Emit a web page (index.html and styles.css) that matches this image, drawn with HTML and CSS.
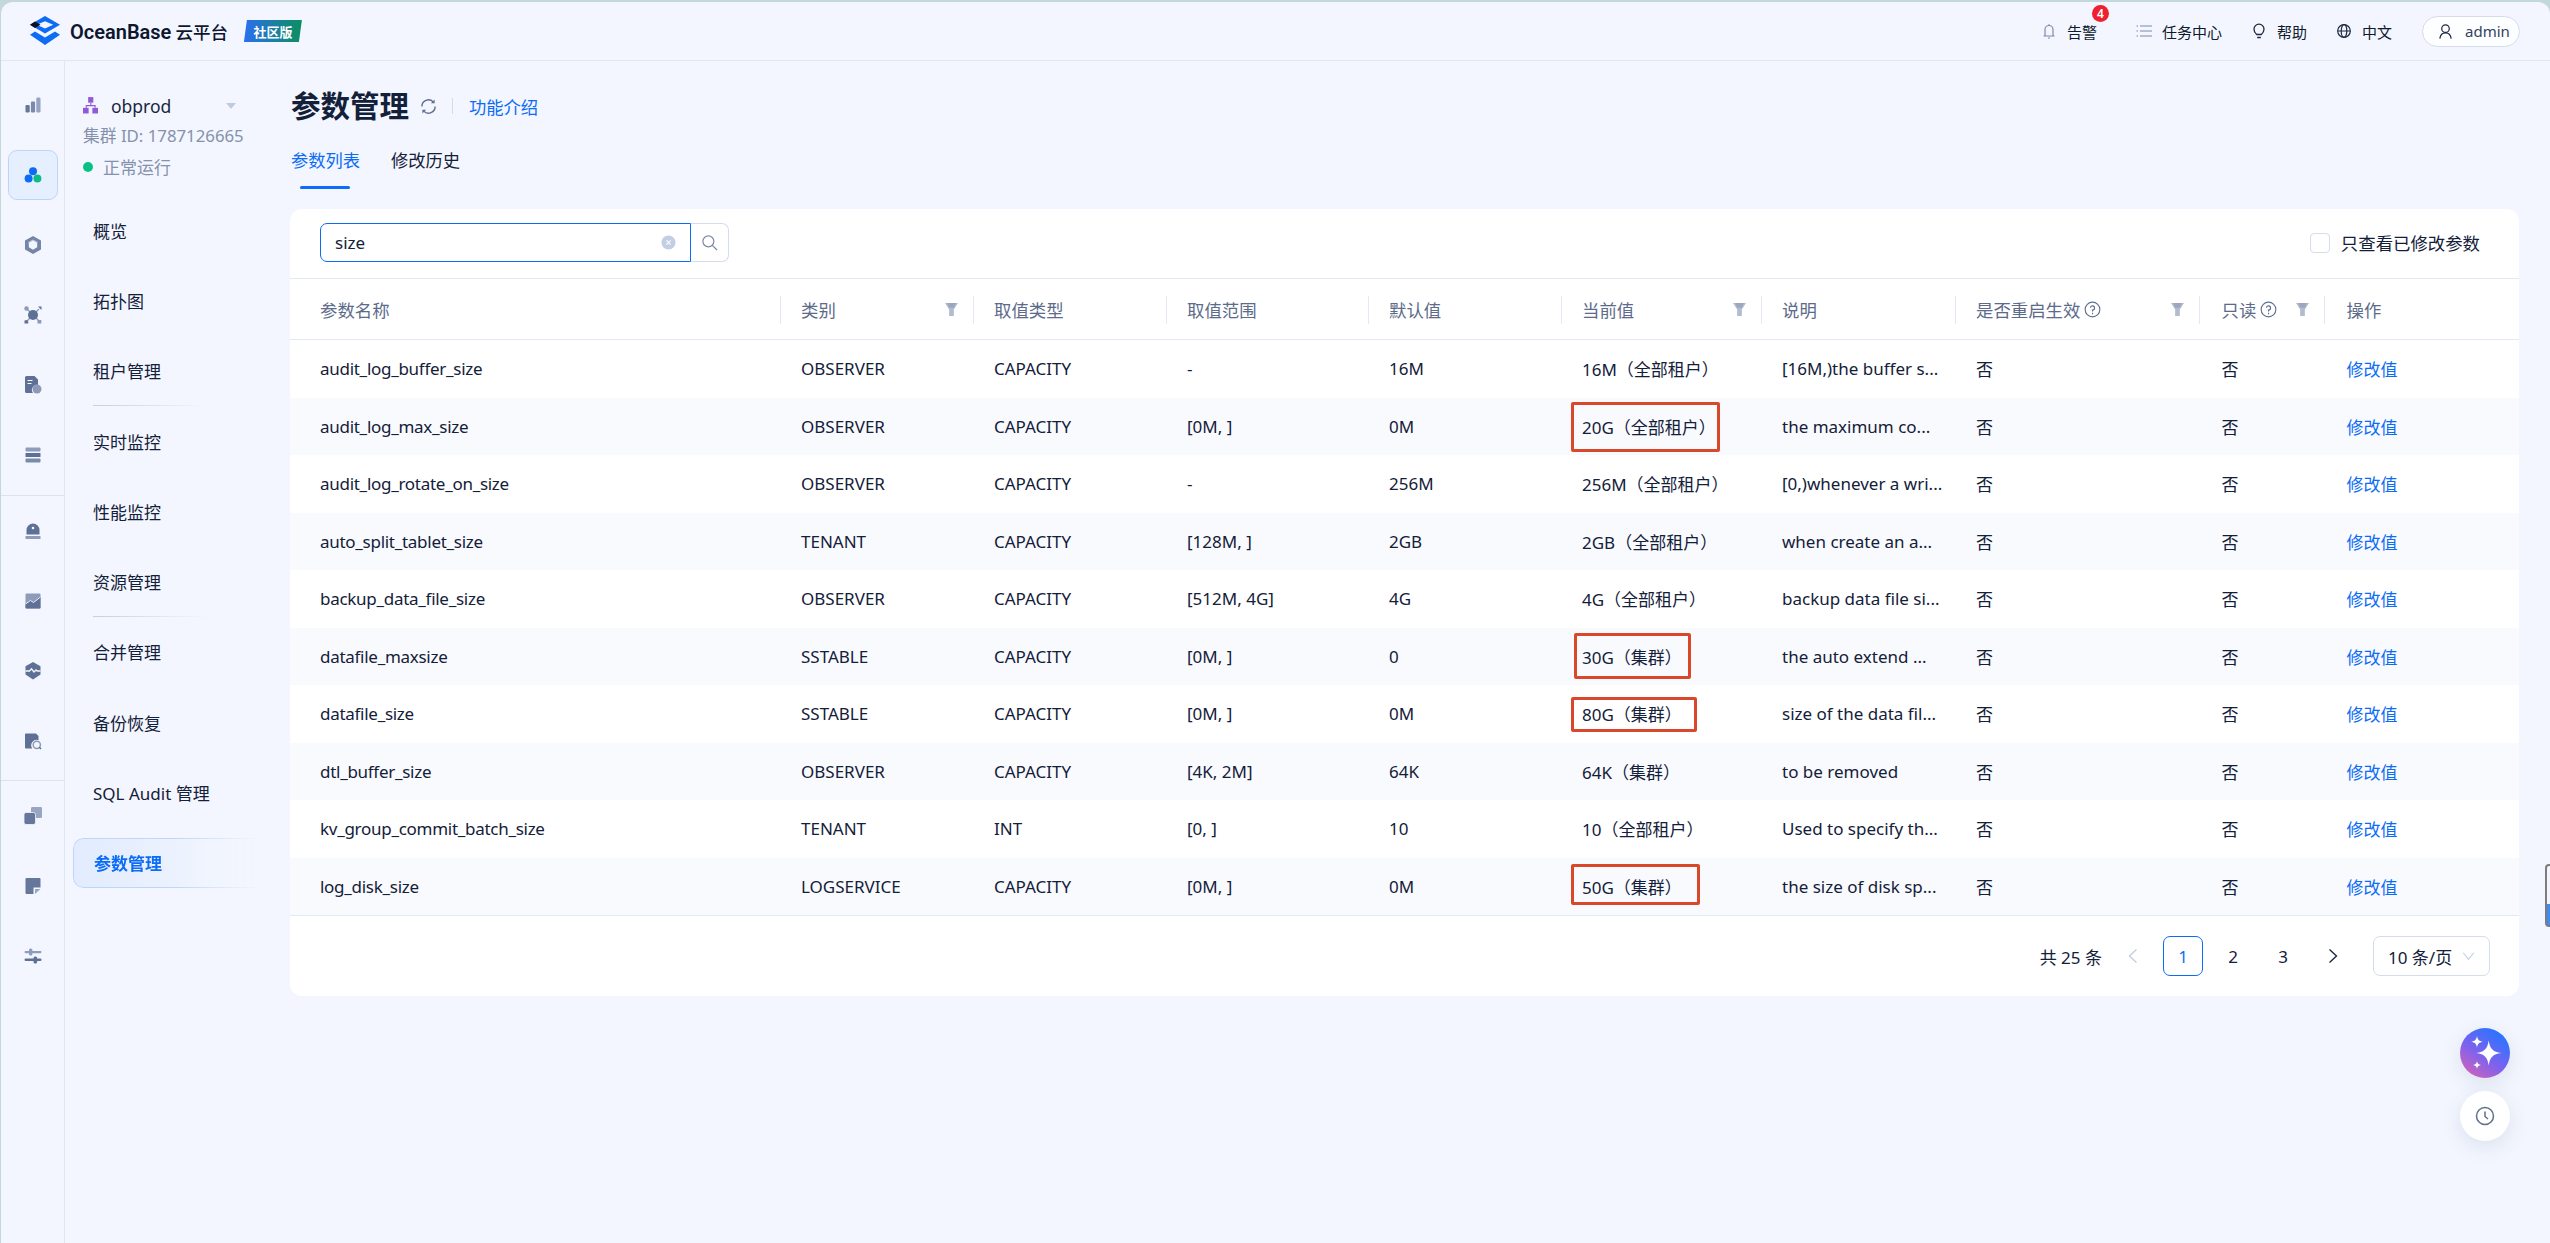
FILE: index.html
```html
<!DOCTYPE html>
<html lang="zh-CN">
<head>
<meta charset="utf-8">
<title>OceanBase 云平台 - 参数管理</title>
<link rel="stylesheet" href="styles.css">
</head>
<body>
<div class="window">
  <header class="topbar">
    <div class="brand">
      <svg class="logo" viewBox="0 0 32 32"><path fill="#0d6cf5" fill-rule="evenodd" d="M16 1 31 9.8 16 18.5 1 9.8ZM16 6.2 7.8 9.8 16 13.4 24.2 9.8Z"/><path fill="#0a0f24" d="M1 9.8 6 6.6 11.5 9.8 6 13Z"/><path fill="#0d6cf5" d="M6 16.4 16 22.4 26 16.4 31 19.8 16 30 1 19.8Z"/></svg>
      <span class="brand-name">OceanBase<span class="brand-cn">云平台</span></span>
      <span class="edition">社区版</span>
    </div>
    <div class="top-actions">
      <div class="top-item alert">
        <svg class="top-icon" viewBox="0 0 18 18" fill="none" stroke="#7d8aa6" stroke-width="1.2"><path d="M5 14V7.5a4 4 0 0 1 8 0V14M3.5 14h11M8 16h2"/><path d="M9 2.2v1.3"/></svg>
        <span>告警</span><span class="badge">4</span>
      </div>
      <div class="top-item tasks">
        <svg class="top-icon" viewBox="0 0 18 18" fill="none" stroke="#7d8aa6" stroke-width="1.2"><path d="M5 4h12M5 9h12M5 14h12M1.500 4h1.500M1.500 9h1.500M1.500 14h1.500"/></svg>
        <span>任务中心</span>
      </div>
      <div class="top-item help">
        <svg class="top-icon" viewBox="0 0 18 18" fill="none" stroke="#1d2940" stroke-width="1.3"><path d="M6.700 12.500C5.400 11.400 4 10 4 7.200a5 5 0 0 1 10 0c0 2.800-1.400 4.200-2.700 5.300ZM7.200 15.500h3.600"/></svg>
        <span>帮助</span>
      </div>
      <div class="top-item lang">
        <svg class="top-icon" viewBox="0 0 18 18" fill="none" stroke="#1d2940" stroke-width="1.200"><circle cx="9" cy="9" r="6.300"/><ellipse cx="9" cy="9" rx="2.800" ry="6.300"/><path d="M2.700 9h12.600"/></svg>
        <span>中文</span>
      </div>
      <div class="user-pill">
        <svg class="user-icon" viewBox="0 0 18 18" fill="none" stroke="#1d2940" stroke-width="1.300"><circle cx="9" cy="6" r="4"/><path d="M3 16.500c.5-3.600 2.700-6 6-6s5.500 2.400 6 6"/></svg>
        <span>admin</span>
      </div>
    </div>
  </header>

  <div class="layout">
    <nav class="rail">
      <div class="rail-group first">
        <div class="rail-item"><svg class="rail-icon" viewBox="0 0 18 18"><rect x="1.500" y="9" width="4.200" height="7.500" rx="1.200" fill="#66779b"/><rect x="6.900" y="5.500" width="4.200" height="11" rx="1.200" fill="#7a8aab"/><rect x="12.300" y="1.500" width="4.200" height="15" rx="1.200" fill="#96a4c1"/></svg></div>
        <div class="rail-item"><div class="rail-tile"><svg class="rail-icon" viewBox="0 0 18 18"><circle cx="9" cy="5.300" r="4" fill="#0d6cf5"/><circle cx="4.600" cy="12.500" r="4" fill="#0d6cf5"/><circle cx="13.400" cy="12.500" r="4" fill="#0bbd84"/></svg></div></div>
        <div class="rail-item"><svg class="rail-icon" viewBox="0 0 18 18"><path fill="#7485a6" fill-rule="evenodd" d="M9 0 17 4.500V13.500L9 18 1 13.500V4.500ZM9 4.300 4.800 6.700V11.300L9 13.700 13.200 11.300V6.700Z"/><path fill="#c8d1e3" d="M9 3.400 14 6.300 13.200 6.900 9 4.400 4.800 6.900 4 6.300Z"/></svg></div>
        <div class="rail-item"><svg class="rail-icon" viewBox="0 0 18 18"><path stroke="#8896b4" stroke-width="1.200" d="M3 3l12 12M15 3 3 15"/><circle cx="9" cy="9" r="5" fill="#5f7096"/><circle cx="2.500" cy="2.500" r="2.200" fill="#8c9ab8"/><path fill="#5f7096" d="M14 .5h3.500V4ZM.5 17.500V14.500L3 14 4.500 16 4 17.500Z"/><rect x="13.500" y="14" width="3.800" height="3.500" fill="#8c9ab8"/></svg></div>
        <div class="rail-item"><svg class="rail-icon" viewBox="0 0 18 18"><path fill="#5f7096" d="M2.500 0h8l3.500 3.500V9a5 5 0 0 0-5 8H2.500A1.500 1.500 0 0 1 1 15.500V1.500A1.500 1.500 0 0 1 2.500 0Z"/><path stroke="#f3f6fe" stroke-width="1.200" d="M3.500 4.500h5M3.500 7.500h4"/><circle cx="13" cy="13" r="4.500" fill="#8c9ab8"/></svg></div>
        <div class="rail-item"><svg class="rail-icon" viewBox="0 0 18 18"><rect x="1.500" y="1.500" width="15" height="4" rx="1" fill="#8e9cbb"/><rect x="1.500" y="7" width="15" height="4" rx=".5" fill="#5f7096"/><rect x="1.500" y="12.500" width="15" height="4" rx="1" fill="#7a8aab"/></svg></div>
      </div>
      <div class="rail-group second">
        <div class="rail-item"><svg class="rail-icon" viewBox="0 0 18 18"><path fill="#5f7096" d="M2.500 12.500V8a6.500 6.500 0 0 1 13 0v4.500Z"/><circle cx="9" cy="6" r="1.300" fill="#f3f6fe"/><rect x="1.500" y="14" width="15" height="3" rx=".5" fill="#8e9cbb"/></svg></div>
        <div class="rail-item"><svg class="rail-icon" viewBox="0 0 18 18"><rect x="1.500" y="1.500" width="15" height="15" rx="1" fill="#8e9cbb"/><path fill="#5f7096" d="M1.500 11.500 6.500 8l3 2 7-5.500V15.500a1 1 0 0 1-1 1h-13a1 1 0 0 1-1-1Z"/><path fill="none" stroke="#f3f6fe" stroke-width="1" d="M1.500 12 6.500 8.500l3 2 7-5.500"/></svg></div>
        <div class="rail-item"><svg class="rail-icon" viewBox="0 0 18 18"><path fill="#5f7096" d="M9 0 16.500 4.200V12.500L9 17.500 1.500 12.500V4.200Z"/><path fill="none" stroke="#f3f6fe" stroke-width="1.300" d="M1.500 9H5.500L7.500 6.800 10 10 12 8l1.200 1H16.500"/></svg></div>
        <div class="rail-item"><svg class="rail-icon" viewBox="0 0 18 18"><path fill="#5f7096" d="M2 1.500h10l2.500 2.500v4.200a5.500 5.500 0 0 0-6.300 8.300H2a1 1 0 0 1-1-1v-13a1 1 0 0 1 1-1Z"/><circle cx="12.800" cy="12.800" r="3.600" fill="none" stroke="#8c9ab8" stroke-width="1.500"/><path stroke="#5f7096" stroke-width="1.500" d="M15.300 15.300 17 17"/></svg></div>
      </div>
      <div class="rail-group">
        <div class="rail-item"><svg class="rail-icon" viewBox="0 0 18 18"><rect x="7" y="0" width="11" height="11" rx="1.200" fill="#98a6c3"/><rect x="0" y="5.500" width="11.500" height="12" rx="2" fill="#66779b" stroke="#f3f6fe" stroke-width=".8"/></svg></div>
        <div class="rail-item"><svg class="rail-icon" viewBox="0 0 18 18"><path fill="#66779b" d="M2.500 1h13a1 1 0 0 1 1 1v8.500h-7v6.500h-7a1 1 0 0 1-1-1V2a1 1 0 0 1 1-1Z"/><path fill="#98a6c3" d="M11 12h5.500L11 17Z"/></svg></div>
        <div class="rail-item"><svg class="rail-icon" viewBox="0 0 18 18"><rect x=".5" y="4" width="17" height="2.200" rx="1.100" fill="#8e9cbb"/><rect x="5" y="1.500" width="3.400" height="7" rx="1.500" fill="#8e9cbb"/><rect x=".5" y="11.500" width="17" height="2.600" rx="1.300" fill="#5f7096"/><rect x="9.500" y="9.500" width="3.600" height="7" rx="1.500" fill="#5f7096"/></svg></div>
      </div>
    </nav>

    <aside class="subnav">
      <div class="cluster-name">
        <svg class="cluster-icon" viewBox="0 0 16 18" fill="#8f5ad9"><rect x="5.500" y="0" width="5.500" height="6"/><path d="M7.700 6h1.200v2.500h4.600v3h-1.200V9.700H4.100v1.800H2.900v-3h4.800Z"/><rect x="0" y="11.500" width="6" height="6"/><rect x="10" y="11.500" width="6" height="6"/></svg>
        <span>obprod</span>
        <span class="caret"></span>
      </div>
      <div class="cluster-id">集群 ID: 1787126665</div>
      <div class="cluster-status"><span class="dot"></span>正常运行</div>
      <ul class="menu">
        <li class="menu-item">概览</li>
        <li class="menu-item">拓扑图</li>
        <li class="menu-item sep">租户管理</li>
        <li class="menu-item">实时监控</li>
        <li class="menu-item">性能监控</li>
        <li class="menu-item sep">资源管理</li>
        <li class="menu-item">合并管理</li>
        <li class="menu-item">备份恢复</li>
        <li class="menu-item">SQL Audit 管理</li>
        <li class="menu-item active"><span class="active-pill">参数管理</span></li>
      </ul>
    </aside>

    <main class="main">
      <div class="page-head">
        <h1 class="page-title">参数管理</h1>
        <svg class="refresh" viewBox="0 0 18 18" fill="none" stroke-width="1.500"><path stroke="#5f6f8f" d="M2 9a7 7 0 0 1 12-4.900"/><path stroke="#5f6f8f" d="M16 9a7 7 0 0 1-12 4.900"/><path fill="#5f6f8f" d="M15.500 1.500v4h-4Z"/><path fill="#5f6f8f" d="M2.500 16.500v-4h4Z"/></svg>
        <span class="head-sep"></span>
        <a class="head-link">功能介绍</a>
      </div>
      <div class="tabs">
        <div class="tab current">参数列表</div>
        <div class="tab">修改历史</div>
      </div>

      <section class="card">
        <div class="toolbar">
          <div class="search">
            <div class="search-input">
              <span>size</span>
              <svg class="clear" viewBox="0 0 16 16"><circle cx="8" cy="8" r="7.500" fill="#c3cee5"/><path stroke="#fff" stroke-width="1.200" d="M5.800 5.800l4.400 4.400M10.200 5.800l-4.400 4.400"/></svg>
            </div>
            <div class="search-btn"><svg viewBox="0 0 18 18" fill="none" stroke="#7b8aa8" stroke-width="1.300"><circle cx="7.800" cy="7.800" r="5.800"/><path d="M12 12l5 5"/></svg></div>
          </div>
          <label class="only-changed"><span class="checkbox"></span>只查看已修改参数</label>
        </div>

        <div class="table">
          <div class="row head">
            <div class="cell">参数名称</div>
            <div class="cell"><span>类别</span><svg class="filter" viewBox="0 0 14 14"><path fill="#b3bbcf" d="M0 0h14L9.500 7v7h-5V7Z"/><path fill="#9ba6bf" d="M2.500 0h9L9.500 5h-5Z"/></svg></div>
            <div class="cell">取值类型</div>
            <div class="cell">取值范围</div>
            <div class="cell">默认值</div>
            <div class="cell"><span>当前值</span><svg class="filter" viewBox="0 0 14 14"><path fill="#b3bbcf" d="M0 0h14L9.500 7v7h-5V7Z"/><path fill="#9ba6bf" d="M2.500 0h9L9.500 5h-5Z"/></svg></div>
            <div class="cell">说明</div>
            <div class="cell"><span class="with-help">是否重启生效<svg class="help-mark" viewBox="0 0 18 18" fill="none" stroke="#5f6f8f" stroke-width="1.200"><circle cx="9" cy="9" r="7.800"/><path d="M6.800 7.200A2.200 2.200 0 1 1 9 9.500v1.700M9 12.500v1.500"/></svg></span><svg class="filter" viewBox="0 0 14 14"><path fill="#b3bbcf" d="M0 0h14L9.500 7v7h-5V7Z"/><path fill="#9ba6bf" d="M2.500 0h9L9.500 5h-5Z"/></svg></div>
            <div class="cell"><span class="with-help">只读<svg class="help-mark" viewBox="0 0 18 18" fill="none" stroke="#5f6f8f" stroke-width="1.200"><circle cx="9" cy="9" r="7.800"/><path d="M6.800 7.200A2.200 2.200 0 1 1 9 9.500v1.700M9 12.500v1.500"/></svg></span><svg class="filter" viewBox="0 0 14 14"><path fill="#b3bbcf" d="M0 0h14L9.500 7v7h-5V7Z"/><path fill="#9ba6bf" d="M2.500 0h9L9.500 5h-5Z"/></svg></div>
            <div class="cell">操作</div>
          </div>

          <div class="row"><div class="cell">audit_log_buffer_size</div><div class="cell">OBSERVER</div><div class="cell">CAPACITY</div><div class="cell">-</div><div class="cell">16M</div><div class="cell">16M（全部租户）</div><div class="cell">[16M,)the buffer s...</div><div class="cell">否</div><div class="cell">否</div><div class="cell"><a class="edit">修改值</a></div></div>
          <div class="row alt"><div class="cell">audit_log_max_size</div><div class="cell">OBSERVER</div><div class="cell">CAPACITY</div><div class="cell">[0M, ]</div><div class="cell">0M</div><div class="cell">20G（全部租户）<span class="mark m20"></span></div><div class="cell">the maximum co...</div><div class="cell">否</div><div class="cell">否</div><div class="cell"><a class="edit">修改值</a></div></div>
          <div class="row"><div class="cell">audit_log_rotate_on_size</div><div class="cell">OBSERVER</div><div class="cell">CAPACITY</div><div class="cell">-</div><div class="cell">256M</div><div class="cell">256M（全部租户）</div><div class="cell">[0,)whenever a wri...</div><div class="cell">否</div><div class="cell">否</div><div class="cell"><a class="edit">修改值</a></div></div>
          <div class="row alt"><div class="cell">auto_split_tablet_size</div><div class="cell">TENANT</div><div class="cell">CAPACITY</div><div class="cell">[128M, ]</div><div class="cell">2GB</div><div class="cell">2GB（全部租户）</div><div class="cell">when create an a...</div><div class="cell">否</div><div class="cell">否</div><div class="cell"><a class="edit">修改值</a></div></div>
          <div class="row"><div class="cell">backup_data_file_size</div><div class="cell">OBSERVER</div><div class="cell">CAPACITY</div><div class="cell">[512M, 4G]</div><div class="cell">4G</div><div class="cell">4G（全部租户）</div><div class="cell">backup data file si...</div><div class="cell">否</div><div class="cell">否</div><div class="cell"><a class="edit">修改值</a></div></div>
          <div class="row alt"><div class="cell">datafile_maxsize</div><div class="cell">SSTABLE</div><div class="cell">CAPACITY</div><div class="cell">[0M, ]</div><div class="cell">0</div><div class="cell">30G（集群）<span class="mark m30"></span></div><div class="cell">the auto extend ...</div><div class="cell">否</div><div class="cell">否</div><div class="cell"><a class="edit">修改值</a></div></div>
          <div class="row"><div class="cell">datafile_size</div><div class="cell">SSTABLE</div><div class="cell">CAPACITY</div><div class="cell">[0M, ]</div><div class="cell">0M</div><div class="cell">80G（集群）<span class="mark m80"></span></div><div class="cell">size of the data fil...</div><div class="cell">否</div><div class="cell">否</div><div class="cell"><a class="edit">修改值</a></div></div>
          <div class="row alt"><div class="cell">dtl_buffer_size</div><div class="cell">OBSERVER</div><div class="cell">CAPACITY</div><div class="cell">[4K, 2M]</div><div class="cell">64K</div><div class="cell">64K（集群）</div><div class="cell">to be removed</div><div class="cell">否</div><div class="cell">否</div><div class="cell"><a class="edit">修改值</a></div></div>
          <div class="row"><div class="cell">kv_group_commit_batch_size</div><div class="cell">TENANT</div><div class="cell">INT</div><div class="cell">[0, ]</div><div class="cell">10</div><div class="cell">10（全部租户）</div><div class="cell">Used to specify th...</div><div class="cell">否</div><div class="cell">否</div><div class="cell"><a class="edit">修改值</a></div></div>
          <div class="row alt"><div class="cell">log_disk_size</div><div class="cell">LOGSERVICE</div><div class="cell">CAPACITY</div><div class="cell">[0M, ]</div><div class="cell">0M</div><div class="cell">50G（集群）<span class="mark m50"></span></div><div class="cell">the size of disk sp...</div><div class="cell">否</div><div class="cell">否</div><div class="cell"><a class="edit">修改值</a></div></div>
        </div>

        <div class="pager">
          <span class="total">共 25 条</span>
          <span class="page-btn"><svg viewBox="0 0 12 16" fill="none" stroke="#c5cfe3" stroke-width="1.400"><path d="M9.500 1.500 2.500 8l7 6.500"/></svg></span>
          <span class="page-btn on">1</span>
          <span class="page-btn">2</span>
          <span class="page-btn">3</span>
          <span class="page-btn"><svg viewBox="0 0 12 16" fill="none" stroke="#1d2940" stroke-width="1.400"><path d="M2.500 1.500 9.500 8l-7 6.500"/></svg></span>
          <span class="page-size">10 条/页<svg viewBox="0 0 16 12" fill="none" stroke="#c5cfe3" stroke-width="1.400"><path d="M1.500 2 8 10l6.500-8"/></svg></span>
        </div>
      </section>
    </main>
  </div>

  <button class="fab ai"><svg viewBox="0 0 50 50" fill="#fff"><path d="M28.700 12.500c1.200 8 4 11.300 12.500 12.500-8.500 1.200-11.300 4.500-12.500 12.500-1.200-8-4-11.300-12.500-12.500 8.500-1.200 11.300-4.500 12.500-12.500Z"/><path d="M17 7.700c.6 4 2 5.400 6 6-4 .6-5.400 2-6 6-.6-4-2-5.400-6-6 4-.6 5.400-2 6-6Z"/><path d="M17 33c.4 2.700 1.300 3.600 4 4-2.700.4-3.600 1.300-4 4-.4-2.700-1.300-3.600-4-4 2.700-.4 3.600-1.300 4-4Z"/></svg></button>
  <button class="fab clock"><svg viewBox="0 0 20 20" fill="none" stroke="#5f6f8f" stroke-width="1.500"><circle cx="10" cy="10" r="8.500"/><path d="M10 5.500V10.500l3 2.500"/></svg></button>
  <div class="edge-widget"></div>
</div>
</body>
</html>
```
FILE: styles.css
```css
* { box-sizing: border-box; }
html, body { margin: 0; height: 100%; }
body {
  background: #c3d8da;
  padding: 2px 0 0 1px;
  font-family: "Noto Sans", "Noto Sans CJK SC", sans-serif;
  font-size: 17px;
  color: #132039;
  overflow: hidden;
}
.window {
  position: relative;
  height: 1241px;
  background: #f3f6fe;
  border-radius: 12px 12px 0 0;
  display: flex;
  flex-direction: column;
  overflow: hidden;
}

/* top bar */
.topbar {
  height: 59px;
  flex: none;
  display: flex;
  align-items: center;
  justify-content: space-between;
  border-bottom: 1px solid #e1e6f0;
  padding: 0 30px 0 28px;
}
.brand { display: flex; align-items: center; }
.logo { width: 32px; height: 32px; }
.brand-name {
  margin-left: 9px;
  font-family: "Roboto", "Noto Sans CJK SC", sans-serif;
  font-weight: 600;
  font-size: 20px;
  color: #0e1630;
}
.brand-cn { font-family: "Noto Sans CJK SC", sans-serif; font-size: 17.500px; margin-left: 4px; font-weight: 500; }
.edition {
  margin-left: 16px;
  width: 58px;
  height: 22px;
  display: flex;
  align-items: center;
  justify-content: center;
  color: #fff;
  font-size: 13px;
  font-weight: 700;
  background: linear-gradient(90deg, #2b6ff0, #0b8f5f);
  clip-path: polygon(3px 0, 100% 0, 55px 100%, 0 100%);
}
.top-actions { display: flex; align-items: center; font-size: 15px; color: #0f1a2e; }
.top-item { display: flex; align-items: center; position: relative; }
.top-icon { width: 18px; height: 18px; margin-right: 9px; }
.alert { margin-right: 38px; }
.tasks { margin-right: 28px; }
.help { margin-right: 28px; }
.lang { margin-right: 30px; }
.badge {
  position: absolute;
  left: 52px;
  top: -16px;
  width: 17px;
  height: 17px;
  border-radius: 50%;
  background: #f0212f;
  color: #fff;
  font-size: 12px;
  font-weight: 600;
  line-height: 17px;
  text-align: center;
}
.user-pill {
  width: 98px;
  height: 31px;
  border: 1px solid #d5dcec;
  border-radius: 16px;
  background: #fdfeff;
  display: flex;
  align-items: center;
  padding-left: 14px;
  color: #34425e;
  font-size: 15px;
}
.user-icon { width: 17px; height: 17px; margin-right: 11px; }

/* layout */
.layout { flex: 1; display: flex; min-height: 0; }

.rail {
  width: 64px;
  flex: none;
  border-right: 1px solid #e1e6f0;
  padding-top: 9px;
}
.rail-group.first { padding-bottom: 5px; border-bottom: 1px solid #dce3ef; }
.rail-group.second { padding-bottom: 4px; border-bottom: 1px solid #dce3ef; }
.rail-item { height: 70px; display: flex; align-items: center; justify-content: center; }
.rail-tile {
  width: 50px;
  height: 50px;
  border: 1px solid #bdd5fb;
  border-radius: 9px;
  background: #e6effe;
  display: flex;
  align-items: center;
  justify-content: center;
}
.rail-icon { width: 18px; height: 18px; }

.subnav { width: 225px; flex: none; padding: 29px 0 0 18px; }
.cluster-name { display: flex; align-items: center; height: 31px; color: #1a2740; font-size: 17.500px; }
.cluster-icon { width: 15px; height: 17px; margin-right: 13px; }
.caret {
  margin-left: 55px;
  border-left: 5.500px solid transparent;
  border-right: 5.500px solid transparent;
  border-top: 6px solid #c1cbdf;
}
.cluster-id { height: 30px; line-height: 30px; color: #8592ad; font-size: 16.800px; }
.cluster-status { height: 31px; display: flex; align-items: center; color: #8592ad; }
.dot { width: 10px; height: 10px; border-radius: 50%; background: #0ac185; margin-right: 10px; }

.menu { list-style: none; margin: 13px 0 0 -10px; padding: 0; }
.menu-item {
  height: 70.300px;
  display: flex;
  align-items: center;
  padding-left: 20px;
  position: relative;
  color: #132039;
}
.menu-item.sep::after {
  content: "";
  position: absolute;
  left: 20px;
  bottom: 0;
  width: 116px;
  height: 1px;
  background: linear-gradient(90deg, #c5cfe2, rgba(197, 207, 226, 0));
}
.menu-item.active { padding-left: 0; }
.active-pill {
  width: 186px;
  height: 50px;
  display: flex;
  align-items: center;
  padding-left: 20px;
  font-weight: 700;
  color: #0d6cf5;
  border: 1px solid #bfd6fb;
  border-right: 0;
  border-radius: 10px 0 0 10px;
  background: linear-gradient(90deg, #e2ecfe, #f3f6fe);
  -webkit-mask-image: linear-gradient(90deg, #000 55%, transparent 100%);
  mask-image: linear-gradient(90deg, #000 55%, transparent 100%);
}

/* main */
.main { flex: 1; min-width: 0; padding: 26px 31px 0 0; }
.page-head { display: flex; align-items: center; height: 38px; padding-left: 1px; }
.page-title { margin: 0; font-size: 29.500px; font-weight: 700; color: #132039; line-height: 38px; }
.refresh { width: 17px; height: 17px; margin-left: 11px; }
.head-sep { width: 1px; height: 16px; background: #d3dae8; margin-left: 15px; }
.head-link { margin-left: 16px; color: #0d6cf5; font-size: 17.300px; }
.tabs { display: flex; height: 84px; padding-left: 1px; font-size: 17.300px; }
.tab { margin-right: 31px; width: 69px; padding-top: 24px; line-height: 24px; position: relative; white-space: nowrap; }
.tab.current { color: #0d6cf5; }
.tab.current::after {
  content: "";
  position: absolute;
  left: 9px;
  top: 61px;
  width: 50px;
  height: 3px;
  border-radius: 2px;
  background: #0d6cf5;
}

.card {
  background: #fff;
  border-radius: 12px;
  height: 787px;
  overflow: hidden;
}
.toolbar {
  height: 70px;
  padding: 14px 39px 0 30px;
  display: flex;
  justify-content: space-between;
  border-bottom: 1px solid #e3e8f2;
}
.search { display: flex; height: 39px; }
.search-input {
  width: 371px;
  border: 1.500px solid #0d6cf5;
  border-radius: 7px 0 0 7px;
  display: flex;
  align-items: center;
  justify-content: space-between;
  padding: 0 14px 0 14px;
}
.clear { width: 15px; height: 15px; }
.search-btn {
  width: 38px;
  border: 1px solid #d5dcec;
  border-left: 0;
  border-radius: 0 7px 7px 0;
  display: flex;
  align-items: center;
  justify-content: center;
}
.search-btn svg { width: 17px; height: 17px; }
.only-changed { display: flex; align-items: center; height: 39px; font-size: 17.400px; }
.checkbox {
  width: 20px;
  height: 20px;
  border: 1px solid #d5dcec;
  border-radius: 4px;
  margin-right: 11px;
}

.row {
  display: grid;
  grid-template-columns: 490px 193px 193px 202px 193px 200px 194px 244px 125px 195px;
  height: 57.500px;
  align-items: center;
}
.row.alt { background: #f9fafe; }
.cell {
  position: relative;
  padding-left: 21px;
  white-space: nowrap;
  display: flex;
  align-items: center;
  height: 100%;
}
.cell:first-child { padding-left: 30px; letter-spacing: -.28px; }
.cell:nth-child(9), .cell:nth-child(10) { padding-left: 22.500px; }
.head { height: 61px; border-bottom: 1px solid #e3e8f2; color: #5c6b8a; font-size: 17.400px; }
.head .cell { justify-content: space-between; padding-right: 15px; }
.head .cell:first-child { letter-spacing: 0; }
.head .cell + .cell::before {
  content: "";
  position: absolute;
  left: 0;
  top: 17px;
  width: 1px;
  height: 28px;
  background: #e3e8f2;
}
.filter { width: 13px; height: 13px; flex: none; }
.with-help { display: flex; align-items: center; }
.help-mark { width: 17px; height: 17px; margin-left: 4px; }
.edit { color: #0d6cf5; }

.mark {
  position: absolute;
  border: 3.500px solid #d9482b;
  border-radius: 2px;
}
.m20 { left: 10px; top: 4px; width: 149px; height: 50px; }
.m30 { left: 13px; top: 5px; width: 117px; height: 46px; }
.m80 { left: 10px; top: 12px; width: 126px; height: 35px; }
.m50 { left: 10px; top: 6px; width: 129px; height: 41px; }

.pager {
  height: 81px;
  border-top: 1px solid #e3e8f2;
  display: flex;
  align-items: center;
  justify-content: flex-end;
  padding-right: 29px;
}
.total { margin-right: 11px; }
.page-btn {
  width: 40px;
  height: 40px;
  margin-right: 10px;
  border-radius: 7px;
  display: flex;
  align-items: center;
  justify-content: center;
}
.page-btn svg { width: 12px; height: 16px; }
.page-btn.on { border: 1px solid #0d6cf5; color: #0d6cf5; }
.page-size {
  margin-left: 10px;
  width: 117px;
  height: 40px;
  border: 1px solid #d5dcec;
  border-radius: 7px;
  display: flex;
  align-items: center;
  justify-content: space-between;
  padding: 0 14px;
  white-space: nowrap;
}
.page-size svg { width: 13px; height: 10px; flex: none; }

/* floating */
.fab {
  position: absolute;
  right: 40px;
  width: 50px;
  height: 50px;
  border: 0;
  padding: 0;
  border-radius: 50%;
  display: flex;
  align-items: center;
  justify-content: center;
  box-shadow: 0 6px 20px rgba(60, 80, 130, .12);
}
.fab.ai { top: 1026px; background: linear-gradient(215deg, #2b74ff 15%, #7c62ee 55%, #d763b5 95%); }
.fab.ai svg { width: 50px; height: 50px; }
.fab.clock { top: 1089px; background: #fff; }
.fab.clock svg { width: 20px; height: 20px; }
.edge-widget {
  position: absolute;
  right: -8px;
  top: 862px;
  width: 13px;
  height: 63px;
  border: 2px solid #7d7d7d;
  border-radius: 4px;
  background: linear-gradient(180deg, #f3f6fe 65%, #3d8bf5 65%);
}
```
